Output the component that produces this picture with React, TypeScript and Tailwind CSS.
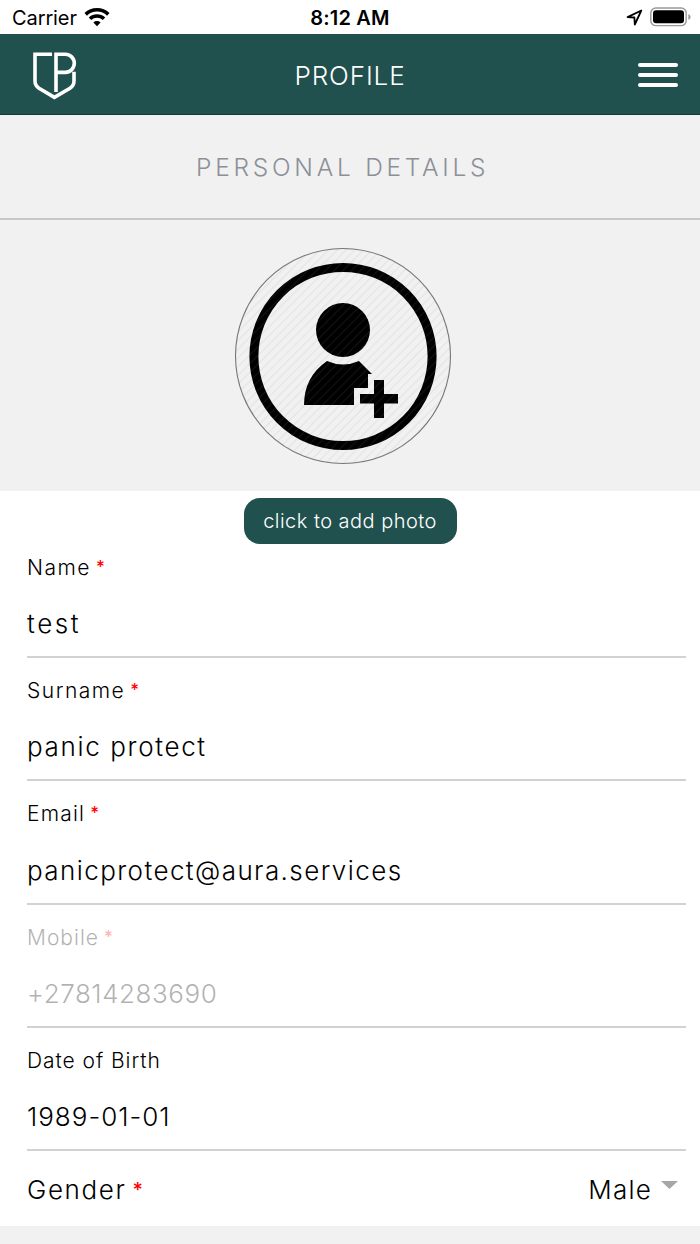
import clsx from 'clsx';

type Field = {
  key: string;
  label: string;
  value: string;
  required?: boolean;
  disabled?: boolean;
  labelClass: string;
  valueClass: string;
};

const fields: Field[] = [
  { key: 'name', label: 'Name', value: 'test', required: true, labelClass: 'tracking-[1.5px]', valueClass: 'tracking-[2.6px]' },
  { key: 'surname', label: 'Surname', value: 'panic protect', required: true, labelClass: 'tracking-[1.5px]', valueClass: 'tracking-[1.65px]' },
  { key: 'email', label: 'Email', value: 'panicprotect@aura.services', required: true, labelClass: 'tracking-[1.2px]', valueClass: 'tracking-[1.42px]' },
  { key: 'mobile', label: 'Mobile', value: '+27814283690', required: true, disabled: true, labelClass: 'tracking-[1px]', valueClass: 'tracking-[0.55px]' },
  { key: 'dob', label: 'Date of Birth', value: '1989-01-01', labelClass: 'tracking-[0.95px]', valueClass: 'tracking-[1px]' },
];

function StatusBar() {
  return (
    <div className="flex h-[34px] items-center justify-between bg-white px-[9px] text-black">
      <div className="flex flex-1 items-center gap-2">
        <span className="ml-[3px] pt-0.5 text-[20px] leading-none tracking-[-0.1px]">Carrier</span>
        <svg width="26" height="20" viewBox="0 0 26 20" fill="none" stroke="currentColor" strokeWidth="3.6" className="-ml-px">
          <path d="M1.7 7.4a16.2 16.2 0 0 1 22.6 0" />
          <path d="M6 11.8a10.1 10.1 0 0 1 14 0" />
          <path d="M13 19.2l-3.6-3.6a5.1 5.1 0 0 1 7.2 0z" fill="currentColor" stroke="none" />
        </svg>
      </div>
      <span className="pt-0.5 text-[20px] leading-none font-semibold tracking-[0.2px]">8:12 AM</span>
      <div className="flex flex-1 items-center justify-end gap-[7px]">
        <svg width="17" height="17" viewBox="0 0 17 17" fill="none" stroke="currentColor" strokeWidth="1.8" strokeLinejoin="round">
          <path d="M15.3 1.5L1.6 8.1l6.8.4.4 7z" />
        </svg>
        <svg width="41" height="20" viewBox="0 0 41 20">
          <rect x="0.8" y="1" width="35.4" height="17.6" rx="5" fill="none" stroke="#999" strokeWidth="1.4" />
          <rect x="3" y="3.3" width="31" height="13" rx="3" fill="#000" />
          <path d="M38.4 7v6q2.2-.8 2.2-3t-2.2-3z" fill="#999" />
        </svg>
      </div>
    </div>
  );
}

function ShieldLogo() {
  return (
    <svg width="44" height="48" viewBox="0 0 44 48" fill="none" stroke="#fff" strokeWidth="3.6" className="ml-[11px]">
      <path d="M19 2.2H2V29q0 4.5 4 7.2L21.4 45.4 37 36.2q4-2.7 4-7.2V19.8" />
      <path d="M23 40V2.2h9.2a9 9 0 0 1 0 18.2H24" />
    </svg>
  );
}

function AddUserIcon() {
  return (
    <svg width="218" height="218" viewBox="0 0 218 218">
      <defs>
        <pattern id="hatch" width="6.2" height="6.2" patternUnits="userSpaceOnUse" patternTransform="rotate(45)">
          <path d="M0 0v6.2" stroke="#888" strokeOpacity="0.13" strokeWidth="2.4" />
        </pattern>
      </defs>
      <circle cx="109" cy="109.5" r="89.1" fill="none" stroke="#000" strokeWidth="9" />
      <circle cx="109" cy="83" r="27" />
      <path d="M93 114q16 7 32 0l13 13h-4v14h-14v17H70q0-28 23-44z" />
      <path d="M140 133h10v14h14v9.5h-14V171h-10v-14.5h-14V147h14z" />
      <circle cx="109" cy="109" r="107.5" fill="url(#hatch)" stroke="#777" strokeWidth="1.1" />
    </svg>
  );
}

function FieldRow({ field, first }: { field: Field; first: boolean }) {
  return (
    <div
      className={clsx(
        'flex flex-col justify-end border-b-2 border-[#d2d2d2]',
        first ? 'h-[114px]' : 'h-[123.3px]'
      )}
    >
      <div
        className={clsx(
          'flex h-[47px] items-center gap-[7px] text-[21px]',
          field.disabled && 'opacity-30'
        )}
      >
        <span className={field.labelClass}>{field.label}</span>
        {field.required && <span className="-ml-0.5 text-[17px] font-medium text-[#f00]">*</span>}
      </div>
      <div className={clsx('flex h-[65px] items-center text-[26px]', field.disabled && 'opacity-30')}>
        <span className={field.valueClass}>{field.value}</span>
      </div>
    </div>
  );
}

export default function App() {
  return (
    <div className="flex h-[1244px] w-[700px] flex-col overflow-hidden bg-[#f1f1f1] font-['Inter',sans-serif]">
      <StatusBar />

      <header className="flex h-[81px] items-center justify-between border-b border-[#17353a] bg-[#20514e] px-[22px]">
        <div className="flex-1 pt-1">
          <ShieldLogo />
        </div>
        <h1 className="pt-0.5 text-[26px] font-light tracking-[0.9px] text-white">PROFILE</h1>
        <div className="flex flex-1 flex-col items-end gap-[6px] pt-0.5">
          <span className="h-[4px] w-10 rounded-full bg-white" />
          <span className="h-[4px] w-10 rounded-full bg-white" />
          <span className="h-[4px] w-10 rounded-full bg-white" />
        </div>
      </header>

      <div className="flex h-[105px] items-center border-b-2 border-[#c8c8c8] pt-0.5 pl-[196px]">
        <h2 className="text-[24.5px] font-light tracking-[3.75px] whitespace-nowrap text-[#8c8f98]">PERSONAL DETAILS</h2>
      </div>

      <div className="flex h-[270.5px] items-center justify-center pt-0.5 pr-3.5">
        <AddUserIcon />
      </div>

      <main className="bg-white font-light text-black">
        <div className="flex h-[53.5px] items-end justify-center">
          <button className="flex h-[46px] w-[213px] items-center justify-center rounded-[16px] bg-[#20514e] text-[20px] tracking-[0.47px] text-white">
            click to add photo
          </button>
        </div>
        <div className="pr-3.5 pl-[27px]">
          {fields.map((f, i) => (
            <FieldRow key={f.key} field={f} first={i === 0} />
          ))}
          <div className="flex h-[75px] items-center justify-between pt-0.5 pr-[8px] text-[26px]">
            <div className="flex items-center gap-1.5">
              <span className="tracking-[1.6px]">Gender</span>
              <span className="text-[20px] font-medium text-[#f00]">*</span>
            </div>
            <div className="flex items-center gap-[9px]">
              <span className="tracking-[1.2px]">Male</span>
              <svg width="17" height="8" viewBox="0 0 16 8" className="mb-2.5" preserveAspectRatio="none">
                <path d="M0 0h16L8 8z" fill="#a6a6a6" />
              </svg>
            </div>
          </div>
        </div>
      </main>
    </div>
  );
}
